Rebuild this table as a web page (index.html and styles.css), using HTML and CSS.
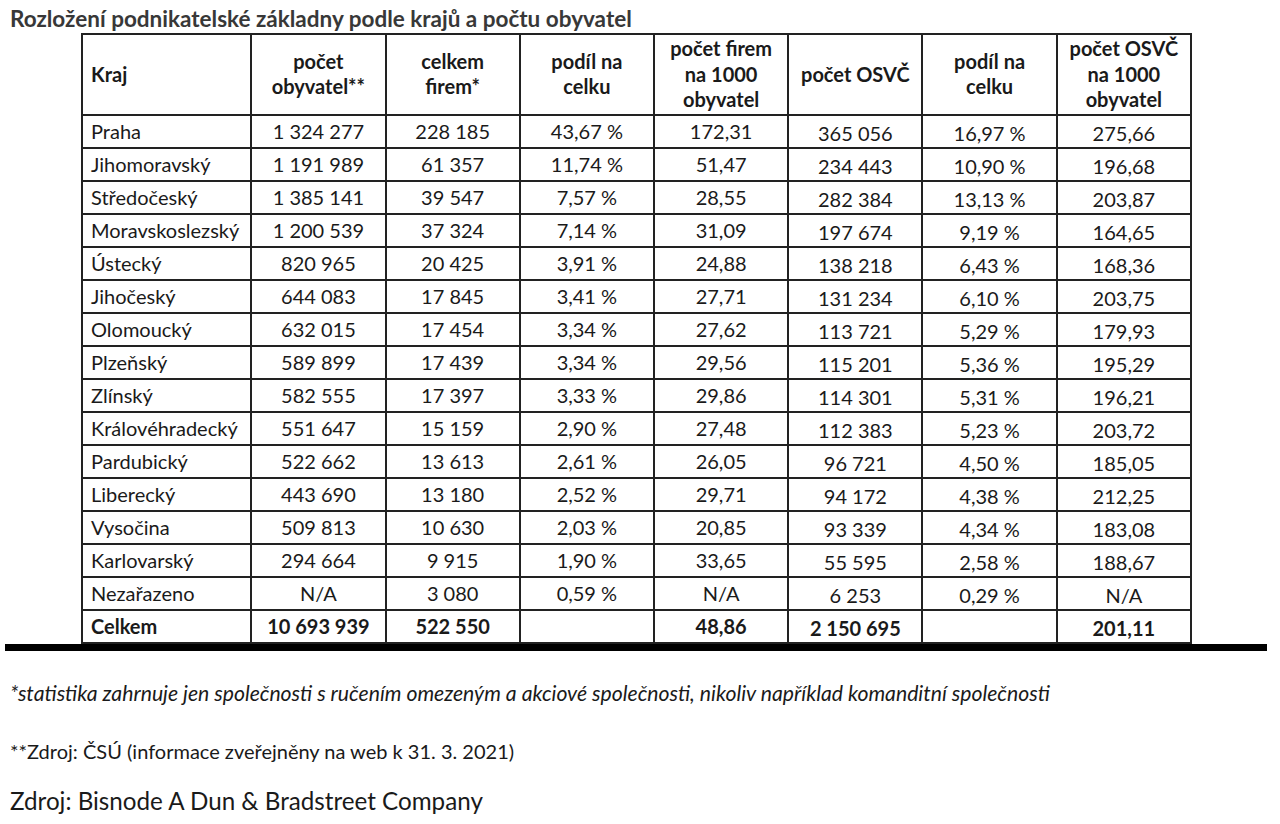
FILE: index.html
```html
<!DOCTYPE html>
<html lang="cs">
<head>
<meta charset="utf-8">
<title>Rozložení podnikatelské základny</title>
<link rel="stylesheet" href="styles.css">
</head>
<body>
<h1 class="title">Rozložení podnikatelské základny podle krajů a počtu obyvatel</h1>
<div class="table-wrap">
<table class="data">
<colgroup>
<col class="c-kraj"><col class="c-num"><col class="c-num"><col class="c-num"><col class="c-num"><col class="c-num"><col class="c-num"><col class="c-num">
</colgroup>
<thead>
<tr>
<th class="left">Kraj</th>
<th>počet<br>obyvatel**</th>
<th>celkem<br>firem*</th>
<th>podíl na<br>celku</th>
<th>počet firem<br>na 1000<br>obyvatel</th>
<th>počet OSVČ</th>
<th>podíl na<br>celku</th>
<th>počet OSVČ<br>na 1000<br>obyvatel</th>
</tr>
</thead>
<tbody>
<tr><td class="left">Praha</td><td>1 324 277</td><td>228 185</td><td>43,67 %</td><td>172,31</td><td class="low">365 056</td><td class="low">16,97 %</td><td class="low">275,66</td></tr>
<tr><td class="left">Jihomoravský</td><td>1 191 989</td><td>61 357</td><td>11,74 %</td><td>51,47</td><td class="low">234 443</td><td class="low">10,90 %</td><td class="low">196,68</td></tr>
<tr><td class="left">Středočeský</td><td>1 385 141</td><td>39 547</td><td>7,57 %</td><td>28,55</td><td class="low">282 384</td><td class="low">13,13 %</td><td class="low">203,87</td></tr>
<tr><td class="left">Moravskoslezský</td><td>1 200 539</td><td>37 324</td><td>7,14 %</td><td>31,09</td><td class="low">197 674</td><td class="low">9,19 %</td><td class="low">164,65</td></tr>
<tr><td class="left">Ústecký</td><td>820 965</td><td>20 425</td><td>3,91 %</td><td>24,88</td><td class="low">138 218</td><td class="low">6,43 %</td><td class="low">168,36</td></tr>
<tr><td class="left">Jihočeský</td><td>644 083</td><td>17 845</td><td>3,41 %</td><td>27,71</td><td class="low">131 234</td><td class="low">6,10 %</td><td class="low">203,75</td></tr>
<tr><td class="left">Olomoucký</td><td>632 015</td><td>17 454</td><td>3,34 %</td><td>27,62</td><td class="low">113 721</td><td class="low">5,29 %</td><td class="low">179,93</td></tr>
<tr><td class="left">Plzeňský</td><td>589 899</td><td>17 439</td><td>3,34 %</td><td>29,56</td><td class="low">115 201</td><td class="low">5,36 %</td><td class="low">195,29</td></tr>
<tr><td class="left">Zlínský</td><td>582 555</td><td>17 397</td><td>3,33 %</td><td>29,86</td><td class="low">114 301</td><td class="low">5,31 %</td><td class="low">196,21</td></tr>
<tr><td class="left">Královéhradecký</td><td>551 647</td><td>15 159</td><td>2,90 %</td><td>27,48</td><td class="low">112 383</td><td class="low">5,23 %</td><td class="low">203,72</td></tr>
<tr><td class="left">Pardubický</td><td>522 662</td><td>13 613</td><td>2,61 %</td><td>26,05</td><td class="low">96 721</td><td class="low">4,50 %</td><td class="low">185,05</td></tr>
<tr><td class="left">Liberecký</td><td>443 690</td><td>13 180</td><td>2,52 %</td><td>29,71</td><td class="low">94 172</td><td class="low">4,38 %</td><td class="low">212,25</td></tr>
<tr><td class="left">Vysočina</td><td>509 813</td><td>10 630</td><td>2,03 %</td><td>20,85</td><td class="low">93 339</td><td class="low">4,34 %</td><td class="low">183,08</td></tr>
<tr><td class="left">Karlovarský</td><td>294 664</td><td>9 915</td><td>1,90 %</td><td>33,65</td><td class="low">55 595</td><td class="low">2,58 %</td><td class="low">188,67</td></tr>
<tr><td class="left">Nezařazeno</td><td>N/A</td><td>3 080</td><td>0,59 %</td><td>N/A</td><td class="low">6 253</td><td class="low">0,29 %</td><td class="low">N/A</td></tr>
<tr class="total"><td class="left">Celkem</td><td>10 693 939</td><td>522 550</td><td></td><td>48,86</td><td class="low">2 150 695</td><td class="low"></td><td class="low">201,11</td></tr>
</tbody>
</table>
</div>
<div class="rule"></div>
<p class="note note-italic">*statistika zahrnuje jen společnosti s ručením omezeným a akciové společnosti, nikoliv například komanditní společnosti</p>
<p class="note note-src">**Zdroj: ČSÚ (informace zveřejněny na web k 31. 3. 2021)</p>
<p class="source">Zdroj: Bisnode A Dun &amp; Bradstreet Company</p>
</body>
</html>
```
FILE: styles.css
```css
html, body {
  margin: 0;
  padding: 0;
  background: #ffffff;
}

body {
  width: 1280px;
  height: 824px;
  overflow: hidden;
  font-family: Lato, "Open Sans", "Liberation Sans", sans-serif;
  color: #1a1a1a;
}

.title {
  margin: 0;
  padding: 5px 0 0 10px;
  height: 28px;
  font-size: 22.5px;
  line-height: 27px;
  font-weight: 700;
  color: #383838;
  white-space: nowrap;
}

.table-wrap {
  padding-left: 81px;
}

.data {
  border-collapse: collapse;
  table-layout: fixed;
  width: 1111px;
  font-size: 20px;
  line-height: 23px;
}

.c-kraj { width: 169px; }
.c-num { width: 134px; }

.data th,
.data td {
  border: 2px solid #222222;
  text-align: center;
  padding: 4px 4px 4px 4px;
  white-space: nowrap;
  color: #1a1a1a;
}

.data th {
  height: 76px;
  font-weight: 700;
  vertical-align: middle;
  line-height: 25.5px;
  padding: 1px 2px 1px 2px;
}

.data td {
  height: 23px;
}

.data td.low {
  padding-top: 6px;
  padding-bottom: 2px;
}

.data .left {
  text-align: left;
  padding-left: 8px;
}

.data .total td {
  font-weight: 700;
}

.rule {
  margin: 0 0 0 5px;
  width: 1262px;
  height: 7px;
  background: #000000;
}

.note {
  margin: 0;
  padding-left: 10px;
  line-height: 26px;
  color: #1a1a1a;
  white-space: nowrap;
}

.note-italic {
  font-style: italic;
  font-size: 21.2px;
  margin-top: 29px;
}

.note-src {
  font-size: 20px;
  margin-top: 32px;
}

.source {
  margin: 22px 0 0 0;
  padding-left: 10px;
  font-size: 24.2px;
  line-height: 30px;
  color: #1a1a1a;
  white-space: nowrap;
}
```
